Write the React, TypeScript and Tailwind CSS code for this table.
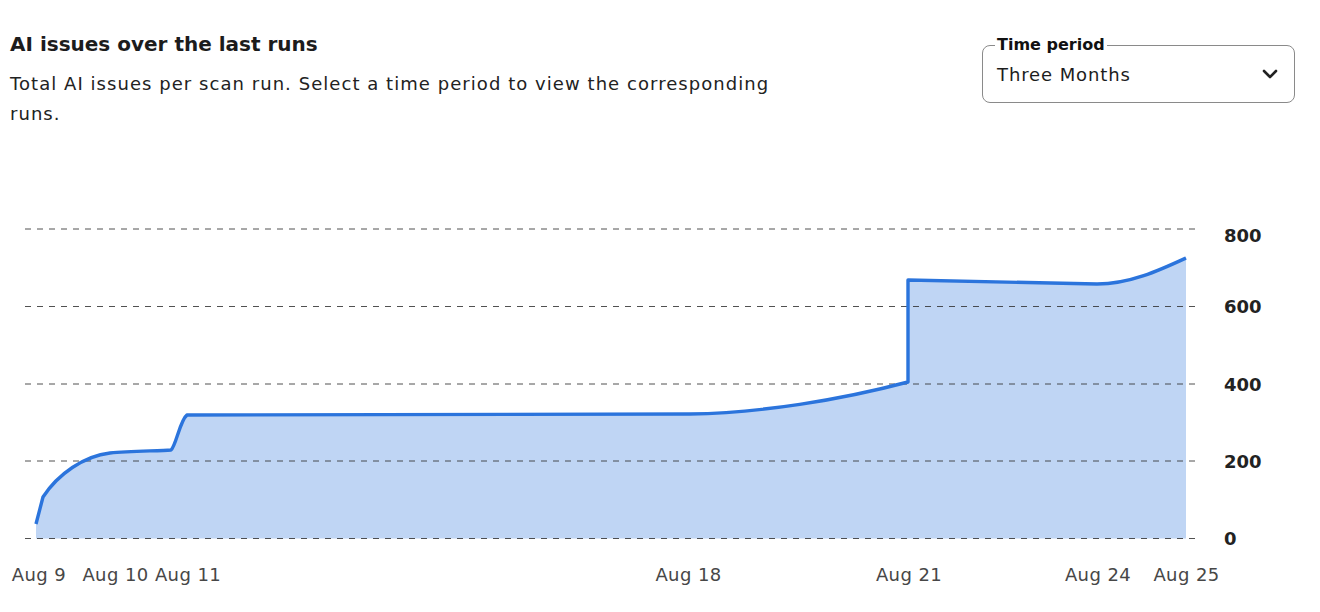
import { ChevronDown } from 'lucide-react';

const FONT = "font-['DejaVu_Sans',sans-serif]";

const GRID_Y = [229, 306.5, 384, 461, 538.5];
const Y_LABELS = [
  { v: '800', y: 235 },
  { v: '600', y: 306.5 },
  { v: '400', y: 384 },
  { v: '200', y: 461 },
  { v: '0', y: 538.5 },
];
const X_LABELS = [
  { t: 'Aug 9', x: 39 },
  { t: 'Aug 10', x: 115.5 },
  { t: 'Aug 11', x: 188 },
  { t: 'Aug 18', x: 688.5 },
  { t: 'Aug 21', x: 909 },
  { t: 'Aug 24', x: 1098 },
  { t: 'Aug 25', x: 1186.5 },
];

const LINE =
  'M36,524 L43,497 C58,474 84,456 110,453 C130,451 158,451 171,450 C176,446 180,420 187,415 L690,414 C760,413 840,400 908,382 L908,280 L1097,284 C1130,284 1160,270 1186,258';

function TimePeriodSelect() {
  return (
    <fieldset className="mt-[5px] w-[313px] rounded-lg border border-[#8a8a8a] px-[14px] pb-[9px]">
      <legend className="-ml-[2px] px-[2px] text-[16px] leading-[20px] font-semibold text-[#111]">Time period</legend>
      <div className="flex h-[38px] items-center justify-between">
        <span className="text-[18px] tracking-[0.9px] text-[#1d1d1d]">Three Months</span>
        <ChevronDown size={24} strokeWidth={2.6} className="-mr-[2px] text-[#222]" />
      </div>
    </fieldset>
  );
}

export default function App() {
  return (
    <div className={`min-h-[612px] w-full bg-white ${FONT}`}>
      <div className="flex items-start justify-between pt-[30px] pr-[25px] pl-[10px]">
        <div className="w-[785px]">
          <h2 className="text-[20px] leading-[28px] font-semibold text-[#1c1c1c]">AI issues over the last runs</h2>
          <p className="mt-[11px] text-[18px] leading-[30px] tracking-[1.05px] text-[#222]">
            Total AI issues per scan run. Select a time period to view the corresponding runs.
          </p>
        </div>
        <TimePeriodSelect />
      </div>

      <svg className="mt-[71px] block" width={1320} height={412} viewBox="0 200 1320 412">
        <path d={`${LINE} L1186,538.5 L36,538.5 Z`} fill="#2b74dc" fillOpacity={0.3} />
        {GRID_Y.map((y) => (
          <line key={y} x1={25} x2={1196} y1={y} y2={y} stroke="#333" strokeOpacity={0.85} strokeDasharray="6 6" />
        ))}
        <path d={LINE} fill="none" stroke="#2b74dc" strokeWidth={3.4} strokeLinejoin="round" />
        {Y_LABELS.map((l) => (
          <text key={l.v} x={1224} y={l.y} dominantBaseline="central" fontSize={18} fontWeight={700} fill="#222">
            {l.v}
          </text>
        ))}
        {X_LABELS.map((l) => (
          <text
            key={l.t}
            x={l.x}
            y={574}
            textAnchor="middle"
            dominantBaseline="central"
            fontSize={18}
            letterSpacing={0.4}
            fill="#474747"
          >
            {l.t}
          </text>
        ))}
      </svg>
    </div>
  );
}
